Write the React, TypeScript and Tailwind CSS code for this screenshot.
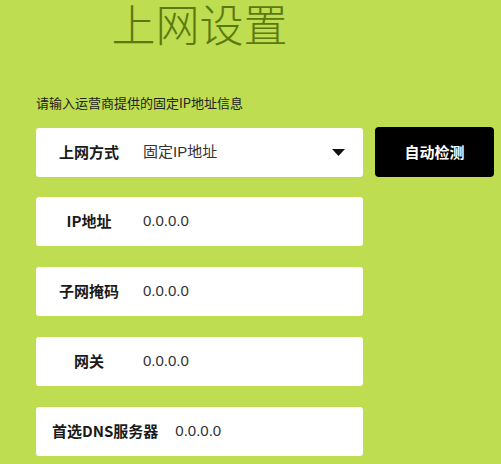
import React from "react";

const font = { fontFamily: '"Noto Sans CJK SC", "Liberation Sans", sans-serif' } as React.CSSProperties;

function Field({ label, value, children }: { label: string; value: string; children?: React.ReactNode }) {
  return (
    <div className="flex items-center w-[327px] h-[49px] bg-white rounded-[3px] pl-4 pr-4">
      <div className="min-w-[74px] text-center font-bold text-[15px] text-[#1a1a1a] whitespace-nowrap">{label}</div>
      <div className="ml-[17px] text-[15px] text-[#333] flex-1" style={{ fontFamily: '"Liberation Sans", "Noto Sans CJK SC", sans-serif' }}>{value}</div>
      {children}
    </div>
  );
}

export default function App() {
  return (
    <div className="w-[501px] h-[464px] bg-[#bedd50] overflow-hidden" style={font}>
      <div className="pl-9">
        <div className="w-[327px] text-center text-[44px] leading-[46px] text-[#5a7a10] font-light">上网设置</div>
        <div className="mt-[50px] text-[13px] leading-none text-[#222]">请输入运营商提供的固定IP地址信息</div>
        <div className="mt-[19px] flex gap-3">
          <Field label="上网方式" value="固定IP地址">
            <svg width="13" height="7" viewBox="0 0 13 7" className="mr-[2px]">
              <path d="M0 0 L13 0 L6.5 7 Z" fill="#111" />
            </svg>
          </Field>
          <button className="w-[119px] h-[50px] -mt-px bg-black rounded-[4px] text-white font-bold text-[15px]">自动检测</button>
        </div>
        <div className="mt-[20px] flex flex-col gap-[21px]">
          <Field label="IP地址" value="0.0.0.0" />
          <Field label="子网掩码" value="0.0.0.0" />
          <Field label="网关" value="0.0.0.0" />
          <Field label="首选DNS服务器" value="0.0.0.0" />
        </div>
      </div>
    </div>
  );
}
